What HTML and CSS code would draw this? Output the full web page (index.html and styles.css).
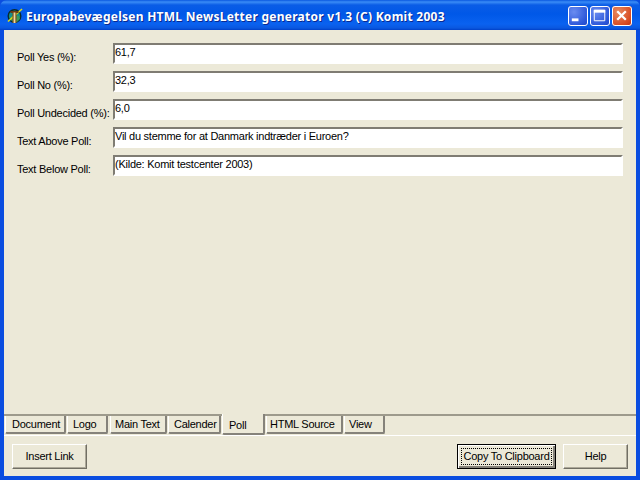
FILE: index.html
```html
<!DOCTYPE html>
<html lang="da">
<head>
<meta charset="utf-8">
<title>Europabevægelsen HTML NewsLetter generator</title>
<link rel="stylesheet" href="styles.css">
</head>
<body>
<div class="window">
  <header class="titlebar">
    <svg class="app-icon" width="16" height="18" viewBox="0 0 16 18">
      <circle cx="7.5" cy="10" r="7" fill="#0b2a2c"/>
      <circle cx="7.5" cy="10" r="5.6" fill="#128f8c"/>
      <path d="M3 12l3-3 6 1 1 3-3 3H6z" fill="#3c9c58"/>
      <path d="M1 15.5L15 3" stroke="#d8d818" stroke-width="1.6" fill="none"/>
      <path d="M3.5 5h8v2h-8z" fill="#6a3c14"/>
      <path d="M5.5 6.5h4V17h-4z" fill="#7a4a1c"/>
      <path d="M6.6 6.5h1.8V17H6.6z" fill="#ead9a0"/>
    </svg>
    <span class="title">Europabevægelsen HTML NewsLetter generator v1.3 (C) Komit 2003</span>
    <div class="controls">
      <div class="ctl ctl-blue">
        <svg width="21" height="21" viewBox="0 0 21 21"><rect x="4" y="13" width="7" height="3" fill="#fff"/></svg>
      </div>
      <div class="ctl ctl-blue">
        <svg width="21" height="21" viewBox="0 0 21 21"><path d="M4.5 4.5h11v11h-11z" fill="none" stroke="#fff"/><rect x="4" y="4" width="12" height="3" fill="#fff"/></svg>
      </div>
      <div class="ctl ctl-red">
        <svg width="21" height="21" viewBox="0 0 21 21"><path d="M5.5 5.5l9 9M14.5 5.5l-9 9" stroke="#fff" stroke-width="2.4" fill="none"/></svg>
      </div>
    </div>
  </header>
  <main class="client">
    <section class="form">
      <div class="row"><label class="label">Poll Yes (%):</label><div class="field">61,7</div></div>
      <div class="row"><label class="label">Poll No (%):</label><div class="field">32,3</div></div>
      <div class="row"><label class="label">Poll Undecided (%):</label><div class="field">6,0</div></div>
      <div class="row"><label class="label">Text Above Poll:</label><div class="field">Vil du stemme for at Danmark indtræder i Euroen?</div></div>
      <div class="row"><label class="label">Text Below Poll:</label><div class="field">(Kilde: Komit testcenter 2003)</div></div>
    </section>
    <nav class="tabs">
      <div class="tab t-doc">Document</div>
      <div class="tab t-logo">Logo</div>
      <div class="tab t-main">Main Text</div>
      <div class="tab t-cal">Calender</div>
      <div class="tab tab-active">Poll</div>
      <div class="tab t-html">HTML Source</div>
      <div class="tab t-view">View</div>
    </nav>
    <footer class="buttons">
      <button class="btn btn-insert">Insert Link</button>
      <div class="spacer"></div>
      <button class="btn btn-copy"><span class="focus">Copy To Clipboard</span></button>
      <button class="btn btn-help">Help</button>
    </footer>
  </main>
</div>
</body>
</html>
```
FILE: styles.css
```css
html, body { margin: 0; padding: 0; width: 640px; height: 480px; overflow: hidden; }
.window {
  width: 640px; height: 480px; display: flex; flex-direction: column;
  background: #0a4de0;
  font: 11px/14px "Liberation Sans", Arial, sans-serif; letter-spacing: -0.25px; color: #000;
}
.titlebar {
  height: 30px; flex: none; display: flex; align-items: center; padding: 0 8px 0 7px;
  box-sizing: border-box;
  background: linear-gradient(#0a58e0 0, #3a8cf6 2px, #0a5ce6 5px, #0058e8 14px, #0a62f0 24px, #0a58e0 28px, #0040c8 30px);
  border-radius: 7px 7px 0 0;
}
.app-icon { margin-right: 3px; flex: none; }
.title {
  flex: 1; color: #fff; font: bold 12px/16px "Noto Sans", Verdana, sans-serif;
  white-space: nowrap; text-shadow: 1px 1px 0 #0a2a90; letter-spacing: 0.26px; padding-top: 3px;
}
.controls { display: flex; gap: 2px; margin-top: 2px; }
.ctl { width: 20px; height: 20px; border-radius: 3px; box-sizing: border-box; outline: 1px solid #fff; outline-offset: -1px; }
.ctl svg { display: block; width: 20px; height: 20px; }
.ctl-blue { background: radial-gradient(circle at 30% 30%, #6a8cf0, #2a55d8 70%, #2045c0); }
.ctl-red { background: radial-gradient(circle at 30% 30%, #e88a60, #d84a20 70%, #b83010); }
.client {
  flex: 1; margin: 0 4px 4px; background: #ece9d8; display: flex; flex-direction: column; min-height: 0;
}
.form { flex: 1; padding: 13px 13px 0 13px; display: flex; flex-direction: column; gap: 7px; }
.row { display: flex; height: 21px; }
.label { width: 96px; flex: none; white-space: nowrap; padding-top: 7px; line-height: 14px; }
.field {
  flex: 1; box-sizing: border-box; height: 21px; background: #fff;
  border: 2px solid; border-color: #7f7c73 #fff #fff #7f7c73;
  padding: 0; line-height: 14px; white-space: nowrap;
}
.tabs {
  height: 21px; flex: none; display: flex; align-items: flex-start; box-sizing: border-box;
  border-top: 2px solid #9d9a8c; padding-left: 1px;
}
.tab {
  height: 18px; box-sizing: border-box; text-align: left; line-height: 16px;
  border-right: 2px solid #85827a; border-bottom: 2px solid #85827a;
  border-left: 1px solid #fff; border-radius: 0 0 2px 2px; margin-right: 1px;
}
.t-doc { width: 61px; padding-left: 6px; }
.t-logo { width: 41px; padding-left: 5px; }
.t-main { width: 57px; margin-left: 1px; padding-left: 4px; }
.t-cal { width: 53px; padding-left: 5px; }
.t-html { width: 77px; padding-left: 3px; }
.t-view { width: 41px; padding-left: 4px; }
.tab-active {
  width: 43px; height: 21px; margin-top: -2px; line-height: 23px; background: #ece9d8;
  border-left: 1px solid #fff; padding-left: 6px;
}
.buttons {
  flex: none; height: 41px; box-sizing: border-box; display: flex; padding: 8px 8px 0 8px;
  border-top: 1px solid #fff; align-items: flex-start;
}
.spacer { flex: 1; }
.btn {
  height: 25px; box-sizing: border-box; margin: 0; padding: 0 0 2px; background: #ece9d8; color: #000;
  font: 11px/14px "Liberation Sans", Arial, sans-serif; letter-spacing: -0.25px;
  border: 1px solid; border-color: #fff #716f64 #716f64 #fff;
  box-shadow: inset -1px -1px 0 #aca899;
}
.btn-insert { width: 75px; }
.btn-copy { width: 99px; border: 1px solid #000; box-shadow: inset 1px 1px 0 #fff, inset -2px -2px 0 #85827a; padding: 3px; }
.btn-help { width: 65px; margin-left: 7px; }
.focus { display: block; border: 1px dotted #000; line-height: 15px; white-space: nowrap; }
```
